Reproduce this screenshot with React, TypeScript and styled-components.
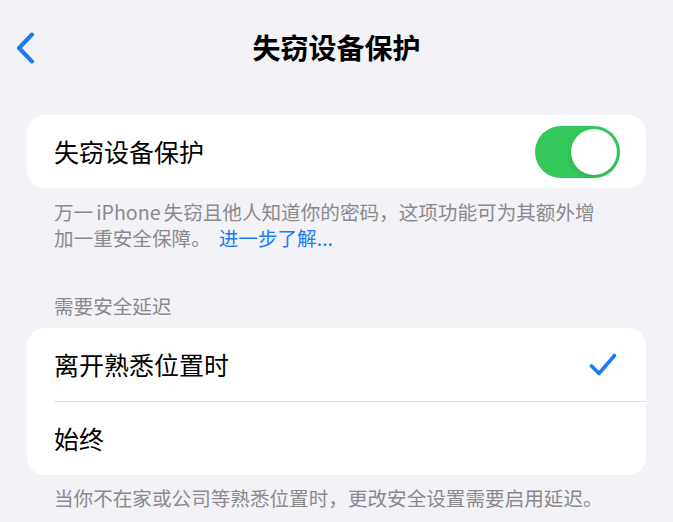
import React from "react"
import { styled, createGlobalStyle } from "styled-components"

const colors = {
	background: "#f2f2f7",
	card: "#ffffff",
	text: "#000000",
	secondary: "#8a8a8e",
	blue: "#1a7cf5",
	green: "#34c759",
	separator: "#e2e2e5",
}

const GlobalStyle = createGlobalStyle`
	html, body {
		margin: 0;
		padding: 0;
		background: ${colors.background};
		font-family: "Noto Sans CJK SC", "Noto Sans", sans-serif;
		-webkit-font-smoothing: antialiased;
	}
`

const Page = styled.div`
	width: 673px;
	min-height: 522px;
	background: ${colors.background};
	overflow: hidden;
`

const NavBar = styled.header`
	display: grid;
	grid-template-columns: 1fr auto 1fr;
	align-items: center;
	height: 94px;
	padding: 0 15px;
`

const BackButton = styled.button`
	display: flex;
	align-items: center;
	justify-self: start;
	padding: 0;
	border: none;
	background: none;
	color: ${colors.blue};
	margin-top: 2px;
`

const Title = styled.h1`
	margin: 0;
	font-size: 28px;
	font-weight: 600;
	line-height: 1;
	color: ${colors.text};
`

const Content = styled.main`
	display: flex;
	flex-direction: column;
	padding: 0 27px;
`

const Card = styled.section<{ $gap: number }>`
	margin-top: ${(p) => p.$gap}px;
	background: ${colors.card};
	border-radius: 18px;
	overflow: hidden;
`

const Row = styled.div`
	display: flex;
	padding-left: 27px;
`

const RowBody = styled.div<{ $divider?: boolean; $inset: number }>`
	flex: 1;
	display: flex;
	align-items: center;
	justify-content: space-between;
	height: 73px;
	padding-right: ${(p) => p.$inset}px;
	border-top: ${(p) => (p.$divider ? `1px solid ${colors.separator}` : "none")};
`

const RowLabel = styled.span`
	font-size: 25px;
	line-height: 1;
	color: ${colors.text};
`

const Toggle = styled.div<{ $on: boolean }>`
	display: flex;
	justify-content: ${(p) => (p.$on ? "flex-end" : "flex-start")};
	align-items: center;
	width: 85px;
	height: 52px;
	padding: 3px;
	box-sizing: border-box;
	border-radius: 26px;
	background: ${(p) => (p.$on ? colors.green : "#e9e9eb")};
`

const Knob = styled.span`
	width: 46px;
	height: 46px;
	border-radius: 50%;
	background: #ffffff;
	box-shadow: 0 2px 5px rgba(0, 0, 0, 0.12);
`

const Footnote = styled.p<{ $top: number }>`
	margin: 0;
	padding: ${(p) => p.$top}px 27px 0;
	font-size: 19.6px;
	line-height: 26px;
	color: ${colors.secondary};
	white-space: nowrap;
`

const Latin = styled.span`
	margin: 0 3px;
`

const Link = styled.a`
	margin-left: 8px;
	color: ${colors.blue};
	text-decoration: none;
`

const SectionHeader = styled.h2`
	margin: 42px 0 0;
	padding: 0 27px;
	font-size: 19.6px;
	font-weight: 400;
	line-height: 26px;
	color: ${colors.secondary};
`

const Chevron = () => (
	<svg width="20" height="32" viewBox="0 0 20 32" fill="none">
		<path d="M17 2.5 L4 16 L17 29.5" stroke="currentColor" strokeWidth="4" strokeLinecap="round" strokeLinejoin="round" />
	</svg>
)

const Check = () => (
	<svg width="28" height="24" viewBox="0 0 28 24" fill="none">
		<path d="M2.5 13 L10 20.5 L25.5 2.5" stroke={colors.blue} strokeWidth="3.6" strokeLinecap="round" strokeLinejoin="round" />
	</svg>
)

const delayOptions = [
	{ label: "离开熟悉位置时", selected: true },
	{ label: "始终", selected: false },
]

const App = () => (
	<Page>
		<GlobalStyle />
		<NavBar>
			<BackButton aria-label="返回">
				<Chevron />
			</BackButton>
			<Title>失窃设备保护</Title>
			<span />
		</NavBar>

		<Content>
			<Card $gap={21}>
				<Row>
					<RowBody $inset={26}>
						<RowLabel>失窃设备保护</RowLabel>
						<Toggle $on>
							<Knob />
						</Toggle>
					</RowBody>
				</Row>
			</Card>

			<Footnote $top={11}>
				万一<Latin>iPhone</Latin>失窃且他人知道你的密码，这项功能可为其额外增
				<br />
				加一重安全保障。<Link href="#">进一步了解...</Link>
			</Footnote>

			<SectionHeader>需要安全延迟</SectionHeader>

			<Card $gap={9}>
				{delayOptions.map((option, i) => (
					<Row key={option.label}>
						<RowBody $divider={i > 0} $inset={29}>
							<RowLabel>{option.label}</RowLabel>
							{option.selected && <Check />}
						</RowBody>
					</Row>
				))}
			</Card>

			<Footnote $top={10}>当你不在家或公司等熟悉位置时，更改安全设置需要启用延迟。</Footnote>
		</Content>
	</Page>
)

export default App
